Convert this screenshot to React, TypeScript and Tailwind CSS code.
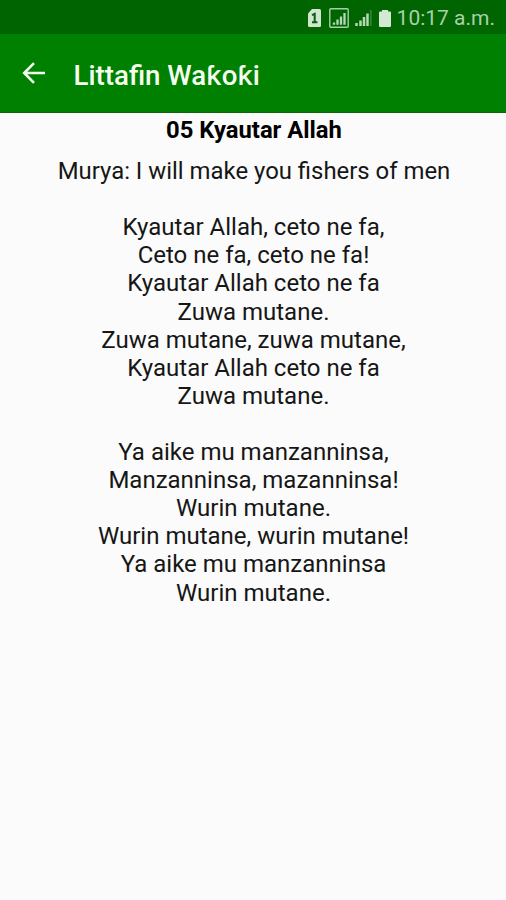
const MELODY = "Murya: I will make you fishers of men";

const VERSES = [
  [
    "Kyautar Allah, ceto ne fa,",
    "Ceto ne fa, ceto ne fa!",
    "Kyautar Allah ceto ne fa",
    "Zuwa mutane.",
    "Zuwa mutane, zuwa mutane,",
    "Kyautar Allah ceto ne fa",
    "Zuwa mutane.",
  ],
  [
    "Ya aike mu manzanninsa,",
    "Manzanninsa, mazanninsa!",
    "Wurin mutane.",
    "Wurin mutane, wurin mutane!",
    "Ya aike mu manzanninsa",
    "Wurin mutane.",
  ],
];

function SimIcon() {
  return (
    <svg width="13" height="18" viewBox="0 0 13 18">
      <path d="M4 0H11.500Q13 0 13 1.500V16.500Q13 18 11.500 18H1.500Q0 18 0 16.500V4.500Z" fill="#cfe6cf" />
      <path d="M4 6.200L6.700 4.900V13.200M4 13.200H9.400" fill="none" stroke="#0f5a0f" strokeWidth="2" />
    </svg>
  );
}

function BoxedSignalIcon() {
  return (
    <svg width="20" height="20" viewBox="0 0 20 20">
      <rect x="0.800" y="0.800" width="18.400" height="18.400" rx="1" fill="none" stroke="#a5cfa5" strokeWidth="1.400" />
      <path d="M5 16.800V14.500M8.500 16.800V11.500M12 16.800V8.500M15.500 16.800V5" stroke="#b5d8b5" strokeWidth="2.300" />
    </svg>
  );
}

function SignalIcon() {
  return (
    <svg width="17" height="18" viewBox="0 0 17 18">
      <path d="M1.500 17V14M5.500 17V11.500M9 17V8M12.500 17V4.500" stroke="#b5d8b5" strokeWidth="2.500" />
      <path d="M15.800 17V1" stroke="#2f802f" strokeWidth="2" />
    </svg>
  );
}

function BatteryIcon() {
  return (
    <svg width="12" height="17" viewBox="0 0 12 17">
      <path d="M3 0H9V1.500H11Q12 1.500 12 2.500V16Q12 17 11 17H1Q0 17 0 16V2.500Q0 1.500 1 1.500H3Z" fill="#d3e9d3" />
    </svg>
  );
}

function StatusBar() {
  return (
    <div className="flex h-[34px] items-center justify-end bg-[#006400] pr-[11px]">
      <div className="mr-[6px] flex items-center pt-[2px]">
        <SimIcon />
        <span className="ml-[8px]">
          <BoxedSignalIcon />
        </span>
        <span className="ml-[6px]">
          <SignalIcon />
        </span>
        <span className="ml-[7px]">
          <BatteryIcon />
        </span>
      </div>
      <span className="pt-[2px] text-[21px] leading-none text-[#a9d1a9]">10:17 a.m.</span>
    </div>
  );
}

function AppBar() {
  return (
    <header className="flex h-[79px] items-center border-b border-[#0b650b] bg-[#008000] pl-[22px] text-[#f4fff0]">
      <button type="button" aria-label="Back" className="mr-[28.500px]">
        <svg width="23" height="22" viewBox="0 0 23 22" fill="none" stroke="currentColor" strokeWidth="2.600">
          <path d="M23 11H2.500M12 1.200L2.200 11L12 20.800" />
        </svg>
      </button>
      {/* Roboto has no hooked k, Inter supplies it */}
      <h1 className="pt-[6px] font-[Roboto,Inter,sans-serif] text-[27.700px] leading-none font-medium">Littafin Waƙoƙi</h1>
    </header>
  );
}

export default function App() {
  return (
    <div className="flex h-[900px] w-[506px] flex-col bg-[#fbfbfb] font-[Roboto,sans-serif]">
      <StatusBar />
      <AppBar />
      <main className="pt-[3px] text-center text-[24px] leading-[28.100px] text-[#161616]">
        <h2 className="pl-[2px] text-[23.800px] font-bold text-black">05 Kyautar Allah</h2>
        <p className="mt-[13px] pl-[2px] text-[23.900px]">{MELODY}</p>
        {VERSES.map((lines, i) => (
          <div key={i} className="mt-[28.100px] pl-[1px]">
            {lines.map((line, j) => (
              <p key={j}>{line}</p>
            ))}
          </div>
        ))}
      </main>
    </div>
  );
}
